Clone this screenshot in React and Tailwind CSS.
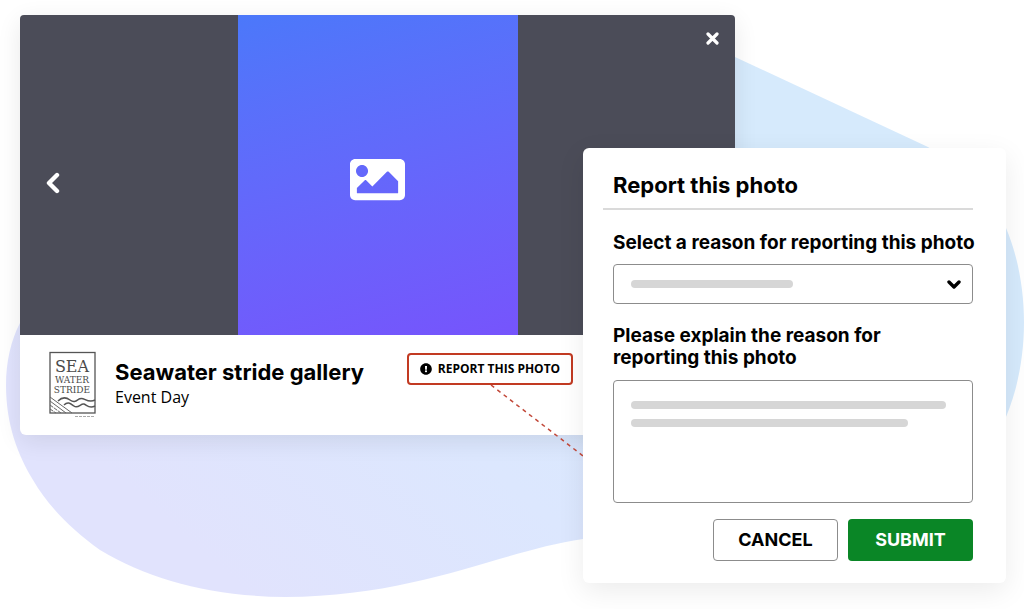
import { useState } from "react";
import { FaExclamationCircle, FaImage } from "react-icons/fa";

const reasons = ["Inappropriate content", "Wrong event", "Privacy concern"];

function Background() {
  return (
    <svg
      viewBox="0 0 1024 609"
      preserveAspectRatio="none"
      className="absolute inset-0 h-full w-full"
      aria-hidden="true"
    >
      <defs>
        <linearGradient id="blob" gradientUnits="userSpaceOnUse" x1="210" y1="560" x2="640" y2="80">
          <stop offset="0" stopColor="#e1e3fd" />
          <stop offset="0.4" stopColor="#dce7fe" />
          <stop offset="1" stopColor="#d6eafc" />
        </linearGradient>
      </defs>
      <path
        fill="url(#blob)"
        d="M6 385 C6 362 11 340 20 323 C90 190 400 0 640 25 C680 30 710 46 735 57 L928 147 C965 170 992 200 1006 228 C1030 285 1030 360 1006 417 C960 520 800 520 583 539 C500 551 420 596 285 597 C210 596 150 580 100 550 C72 530 48 506 33 480 C18 455 6 425 6 385 Z"
      />
    </svg>
  );
}

function Logo() {
  return (
    <svg viewBox="0 0 48 68" width="48" height="68" className="shrink-0" role="img" aria-label="Sea Water Stride">
      <rect x="2" y="1.5" width="45" height="60.5" fill="none" stroke="#555" strokeWidth="1.3" />
      <g fill="#4a4a4a" textAnchor="middle" fontFamily="DejaVu Serif, serif">
        <text x="24" y="21" fontSize="16">SEA</text>
        <text x="24" y="32" fontSize="9">WATER</text>
        <text x="24" y="42" fontSize="9">STRIDE</text>
      </g>
      <g fill="none" stroke="#555" strokeWidth="1.5">
        <path d="M10 50 C14 46 18 46 22 49 C26 52 28 50 31 48 C36 45 39 53 47 49" />
        <path d="M16 54 C20 50 23 53 26 55 C30 58 33 52 36 53 C39 54 41 58 47 55" />
      </g>
      <g stroke="#666" strokeWidth="1">
        <path d="M2 46 L24 62 M2 50 L18 62" />
        <path d="M2 54 L13 62 M2 58 L8 62" strokeDasharray="4 1" />
      </g>
      <path d="M27 65.5 H46" stroke="#aaa" strokeWidth="1" strokeDasharray="3 1" />
    </svg>
  );
}

function Gallery({ onReport }) {
  return (
    <section className="min-w-0 flex-1 self-start rounded-md bg-white shadow-[0_6px_24px_rgba(0,0,0,0.09)]">
      {/* PHOTO */}
      <div className="relative flex h-80 justify-center rounded-t bg-[#4b4c58]">
        <div className="flex w-[280px] items-center justify-center bg-linear-165 from-[#4b78fa] to-[#7654fc]">
          <FaImage size={55} className="mt-2 text-white" />
        </div>
        <button type="button" aria-label="Previous photo" className="absolute inset-y-0 left-6 flex items-center pt-4 pl-0.5 text-white">
          <svg viewBox="0 0 14 22" width="14" height="22" fill="none" stroke="currentColor" strokeWidth="4.4" strokeLinecap="round" strokeLinejoin="round">
            <path d="M11 3 L3 11 L11 19" />
          </svg>
        </button>
        <button type="button" aria-label="Close" className="absolute top-4 right-4 text-white">
          <svg viewBox="0 0 14 14" width="14" height="14" fill="none" stroke="currentColor" strokeWidth="3.2" strokeLinecap="round">
            <path d="M3 3 L12 12 M12 3 L3 12" />
          </svg>
        </button>
      </div>

      {/* CAPTION */}
      <div className="flex h-[100px] items-start pt-4 pl-7">
        <Logo />
        <div className="ml-[19px] w-[292px] pt-2">
          <h1 className="font-['Inter',sans-serif] text-[22px] leading-[26px] font-bold whitespace-nowrap">
            Seawater stride gallery
          </h1>
          <p className="text-base leading-6">Event Day</p>
        </div>
        <div className="relative mt-0.5 shrink-0">
          <button
            type="button"
            onClick={onReport}
            className="flex h-8 w-[166px] items-center justify-center gap-1.5 rounded border-2 border-[#c23a22] bg-white text-xs font-bold whitespace-nowrap"
          >
            <FaExclamationCircle size={12} />
            REPORT THIS PHOTO
          </button>
          <svg
            width="112"
            height="84"
            className="absolute top-full left-1/2"
            aria-hidden="true"
          >
            <path d="M1 0 L110 84" stroke="#c2493a" strokeWidth="1.5" strokeDasharray="4 4" />
          </svg>
        </div>
      </div>
    </section>
  );
}

function ReportForm() {
  const [reason, setReason] = useState("");
  const [details, setDetails] = useState("");

  return (
    <form
      onSubmit={(e) => e.preventDefault()}
      className="relative mt-[133px] -ml-[152px] w-[423px] shrink-0 rounded-md bg-white pt-[22px] pr-[33px] pb-[22px] pl-5 font-['Inter',sans-serif] shadow-[0_8px_28px_rgba(0,0,0,0.08)]"
    >
      <h2 className="border-b-2 border-[#dadada] pb-2 pl-2.5 text-[22px] leading-[30px] font-bold">Report this photo</h2>

      <div className="pl-2.5">
        {/* REASON */}
        <label htmlFor="reason" className="mt-[21px] block text-[19px] leading-6 font-bold whitespace-nowrap">
          Select a reason for reporting this photo
        </label>
        <div className="relative mt-[9px]">
          <select
            id="reason"
            value={reason}
            onChange={(e) => setReason(e.target.value)}
            className="block h-10 w-full appearance-none rounded border border-[#8c8c8c] bg-white px-4"
          >
            <option value=""></option>
            {reasons.map((item) => (
              <option key={item} value={item}>
                {item}
              </option>
            ))}
          </select>
          {!reason && (
            <span className="pointer-events-none absolute top-4 left-[18px] h-2 w-[162px] rounded-full bg-[#d6d6d6]" />
          )}
          <svg
            viewBox="0 0 14 10"
            width="14"
            height="10"
            fill="none"
            stroke="black"
            strokeWidth="3.4"
            strokeLinecap="round"
            strokeLinejoin="round"
            className="pointer-events-none absolute top-4 right-3"
          >
            <path d="M2 2 L7 7 L12 2" />
          </svg>
        </div>

        {/* DETAILS */}
        <label htmlFor="details" className="mt-[21px] block max-w-[320px] text-[19px] leading-[22px] font-bold">
          Please explain the reason for reporting this photo
        </label>
        <div className="relative mt-[11px]">
          <textarea
            id="details"
            value={details}
            onChange={(e) => setDetails(e.target.value)}
            className="block h-[123px] w-full resize-none rounded border border-[#8c8c8c] bg-white p-4"
          />
          {!details && (
            <div className="pointer-events-none absolute top-[21px] left-[18px] space-y-2.5">
              <div className="h-2 w-[315px] rounded-full bg-[#d6d6d6]" />
              <div className="h-2 w-[277px] rounded-full bg-[#d6d6d6]" />
            </div>
          )}
        </div>

        {/* ACTIONS */}
        <div className="mt-4 flex justify-end gap-2.5 text-lg font-bold">
          <button type="button" className="h-[42px] w-[125px] rounded border border-[#8c8c8c] bg-white">
            CANCEL
          </button>
          <button type="submit" className="h-[42px] w-[125px] rounded bg-[#0a8626] text-white">
            SUBMIT
          </button>
        </div>
      </div>
    </form>
  );
}

export default function App() {
  const [open, setOpen] = useState(true);

  return (
    <main className="relative min-h-screen overflow-hidden bg-white font-['Open_Sans',sans-serif] text-black">
      <Background />
      <div className="relative flex pt-[15px] pr-[18px] pb-6 pl-5">
        <Gallery onReport={() => setOpen(true)} />
        {open && <ReportForm />}
      </div>
    </main>
  );
}
